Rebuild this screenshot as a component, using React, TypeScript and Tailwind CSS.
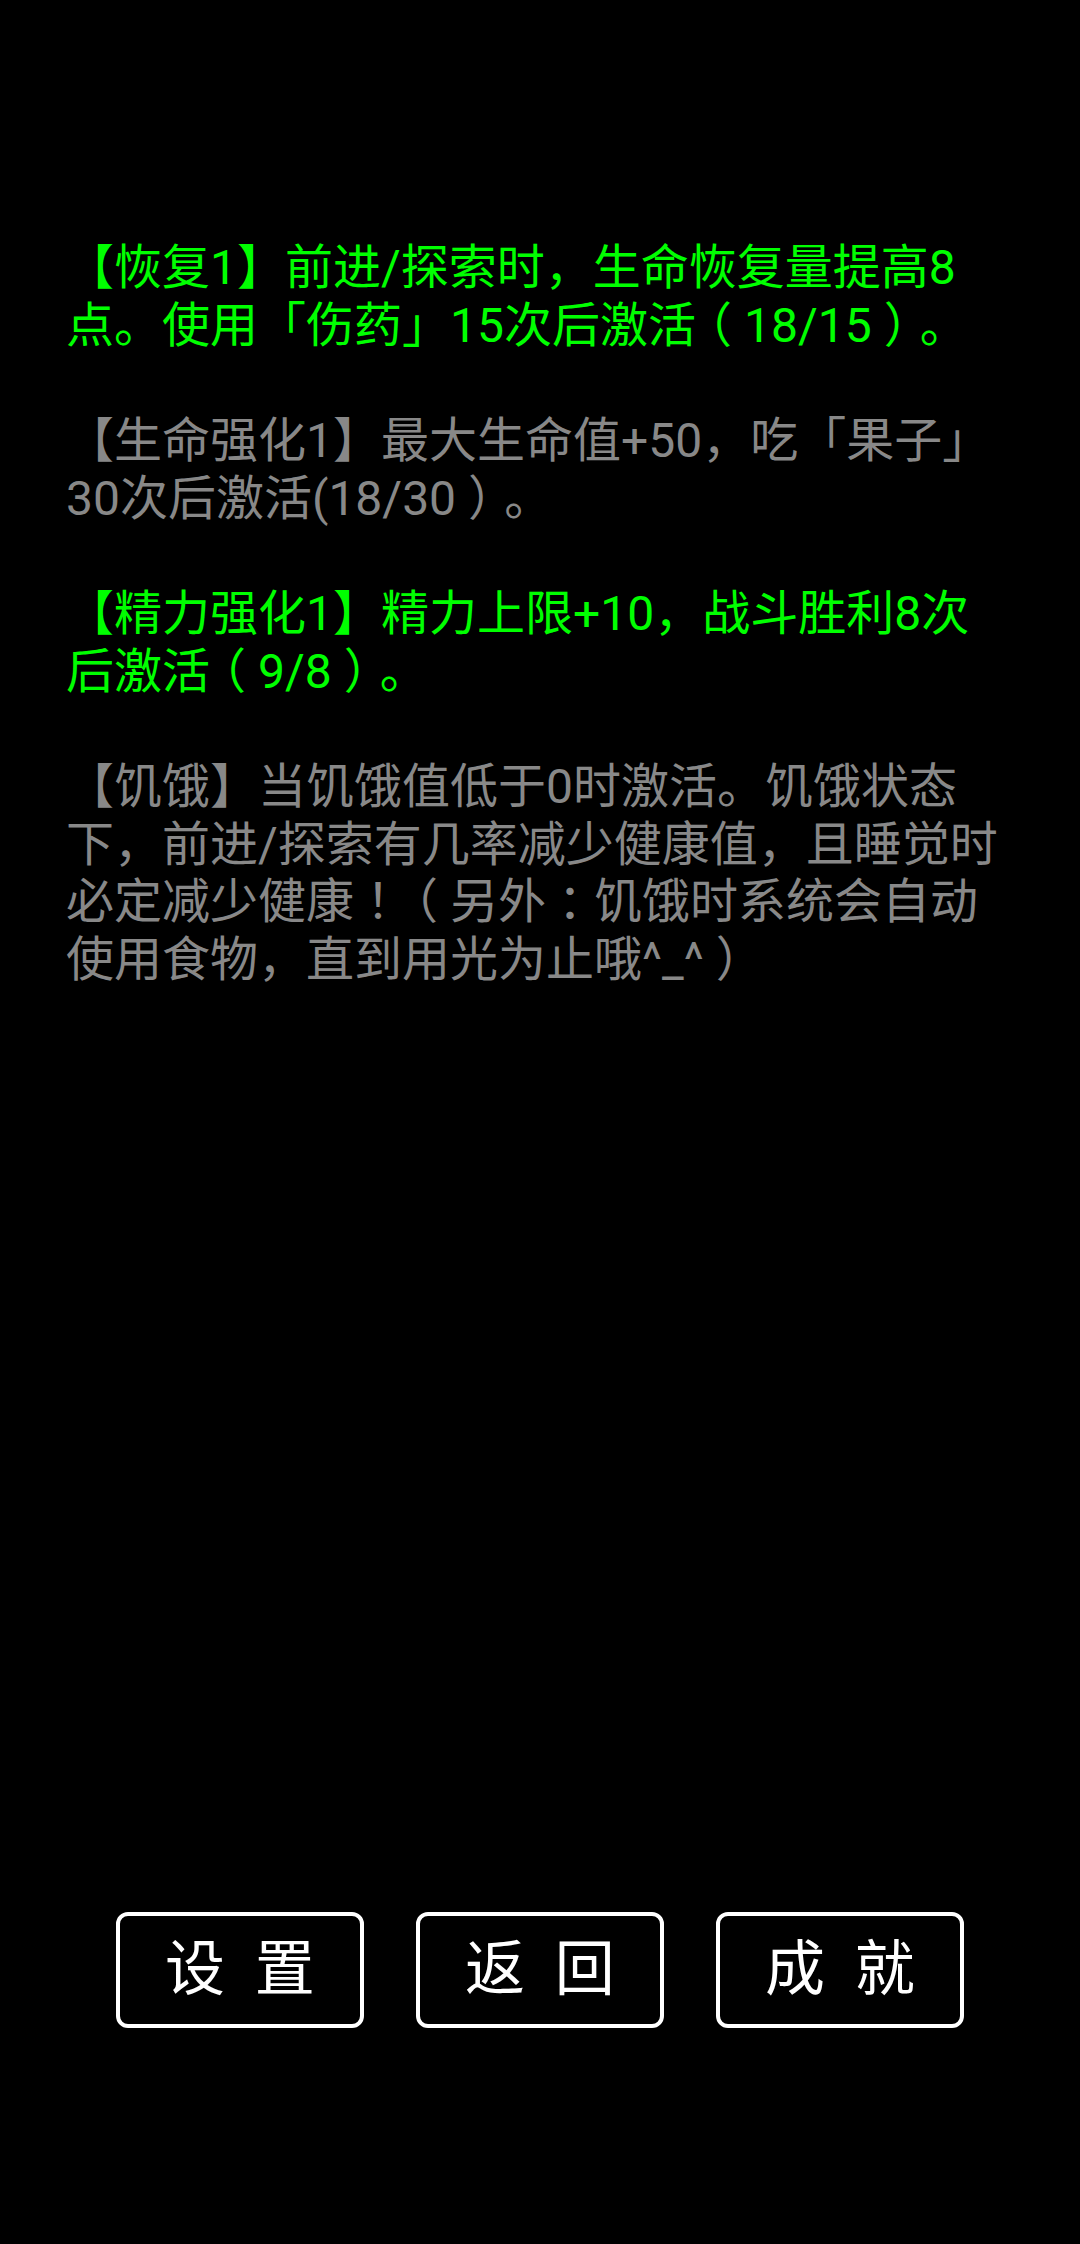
import React from "react";

const FONT = 'Roboto, "Noto Sans CJK SC", sans-serif';

const paras: { color: string; lines: string[] }[] = [
  {
    color: "text-[#00ff00]",
    lines: ["【恢复1】前进/探索时，生命恢复量提高8", "点。使用「伤药」15次后激活（18/15）。"],
  },
  {
    color: "text-[#888888]",
    lines: ["【生命强化1】最大生命值+50，吃「果子」", "30次后激活(18/30）。"],
  },
  {
    color: "text-[#00ff00]",
    lines: ["【精力强化1】精力上限+10，战斗胜利8次", "后激活（9/8）。"],
  },
  {
    color: "text-[#888888]",
    lines: [
      "【饥饿】当饥饿值低于0时激活。饥饿状态",
      "下，前进/探索有几率减少健康值，且睡觉时",
      "必定减少健康！（另外：饥饿时系统会自动",
      "使用食物，直到用光为止哦^_^）",
    ],
  },
];

function Line({ text }: { text: string }) {
  const parts = text.split(/([（）：！])/);
  return (
    <div className="whitespace-nowrap">
      {parts.map((p, i) => {
        if (p === "（" || p === "）" || p === "：" || p === "！")
          return (
            <span key={i} className="px-[12px] [font-feature-settings:'halt']">
              {p}
            </span>
          );
        return <React.Fragment key={i}>{p}</React.Fragment>;
      })}
    </div>
  );
}

function Btn({ label }: { label: string }) {
  return (
    <div className="flex h-[116px] w-[248px] items-center justify-center rounded-[12px] border-[4px] border-white bg-black">
      <span className="whitespace-pre text-[60px] leading-none text-white" style={{ fontFamily: FONT }}>
        {label}
      </span>
    </div>
  );
}

export default function App() {
  return (
    <div lang="zh-CN" className="flex h-[2244px] w-[1080px] flex-col bg-black" style={{ fontFamily: FONT }}>
      <div className="flex flex-col gap-[58px] pl-[66px] pt-[239px] [text-spacing-trim:space-all]">
        {paras.map((p, i) => (
          <div key={i} className={`text-[48px] leading-[57.5px] ${p.color}`}>
            {p.lines.map((l, j) => (
              <Line key={j} text={l} />
            ))}
          </div>
        ))}
      </div>
      <div className="mb-[216px] mt-auto flex justify-center gap-[52px]">
        <Btn label={"设  置"} />
        <Btn label={"返  回"} />
        <Btn label={"成  就"} />
      </div>
    </div>
  );
}
